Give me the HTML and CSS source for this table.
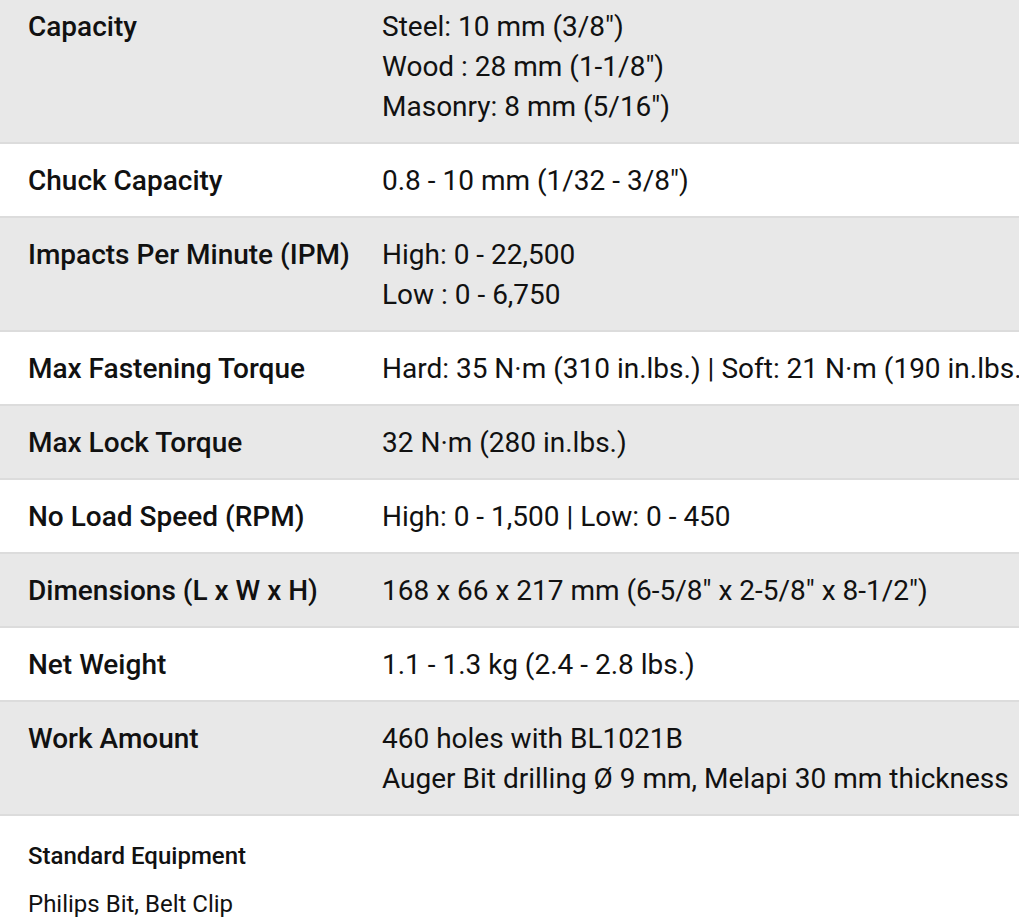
FILE: index.html
```html
<!DOCTYPE html>
<html lang="en">
<head>
    <meta charset="UTF-8">
    <meta name="viewport" content="width=device-width, initial-scale=1.0">
    <title>Specifications</title>
    <link rel="stylesheet" href="styles.css">
</head>
<body>
    <div class="specs">
        <div class="spec-row shaded">
            <div class="spec-label">Capacity</div>
            <div class="spec-value">Steel: 10 mm (3/8")<br>Wood : 28 mm (1-1/8")<br>Masonry: 8 mm (5/16")</div>
        </div>
        <div class="spec-row">
            <div class="spec-label">Chuck Capacity</div>
            <div class="spec-value">0.8 - 10 mm (1/32 - 3/8")</div>
        </div>
        <div class="spec-row shaded">
            <div class="spec-label">Impacts Per Minute (IPM)</div>
            <div class="spec-value">High: 0 - 22,500<br>Low : 0 - 6,750</div>
        </div>
        <div class="spec-row">
            <div class="spec-label">Max Fastening Torque</div>
            <div class="spec-value">Hard: 35 N·m (310 in.lbs.) | Soft: 21 N·m (190 in.lbs.)</div>
        </div>
        <div class="spec-row shaded">
            <div class="spec-label">Max Lock Torque</div>
            <div class="spec-value">32 N·m (280 in.lbs.)</div>
        </div>
        <div class="spec-row">
            <div class="spec-label">No Load Speed (RPM)</div>
            <div class="spec-value">High: 0 - 1,500 | Low: 0 - 450</div>
        </div>
        <div class="spec-row shaded">
            <div class="spec-label">Dimensions (L x W x H)</div>
            <div class="spec-value">168 x 66 x 217 mm (6-5/8" x 2-5/8" x 8-1/2")</div>
        </div>
        <div class="spec-row">
            <div class="spec-label">Net Weight</div>
            <div class="spec-value">1.1 - 1.3 kg (2.4 - 2.8 lbs.)</div>
        </div>
        <div class="spec-row shaded">
            <div class="spec-label">Work Amount</div>
            <div class="spec-value">460 holes with BL1021B<br>Auger Bit drilling Ø 9 mm, Melapi 30 mm thickness</div>
        </div>
    </div>

    <div class="equipment">
        <h3>Standard Equipment</h3>
        <p>Philips Bit, Belt Clip</p>
    </div>
</body>
</html>
```

FILE: styles.css
```css
* {
    box-sizing: border-box;
}

html, body {
    overflow: hidden;
}

body {
    margin: 0;
    font-family: Roboto, "Liberation Sans", sans-serif;
    color: #111;
    background-color: #fff;
}

.specs {
    margin-top: -10px;
}

.spec-row {
    display: flex;
    padding: 17px 0 15px;
    border-bottom: 2px solid #dcdcdc;
    font-size: 28px;
    line-height: 40px;
    white-space: nowrap;
}

.spec-row.shaded {
    background-color: #e8e8e8;
}

.spec-label {
    flex: 0 0 382px;
    padding-left: 28px;
    font-weight: 500;
}

.spec-value {
    flex: 1;
}

.equipment {
    padding: 23px 28px 0;
}

.equipment h3 {
    margin: 0 0 14px;
    font-size: 24px;
    font-weight: 500;
    line-height: 34px;
}

.equipment p {
    margin: 0;
    font-size: 24px;
    line-height: 34px;
}
```
